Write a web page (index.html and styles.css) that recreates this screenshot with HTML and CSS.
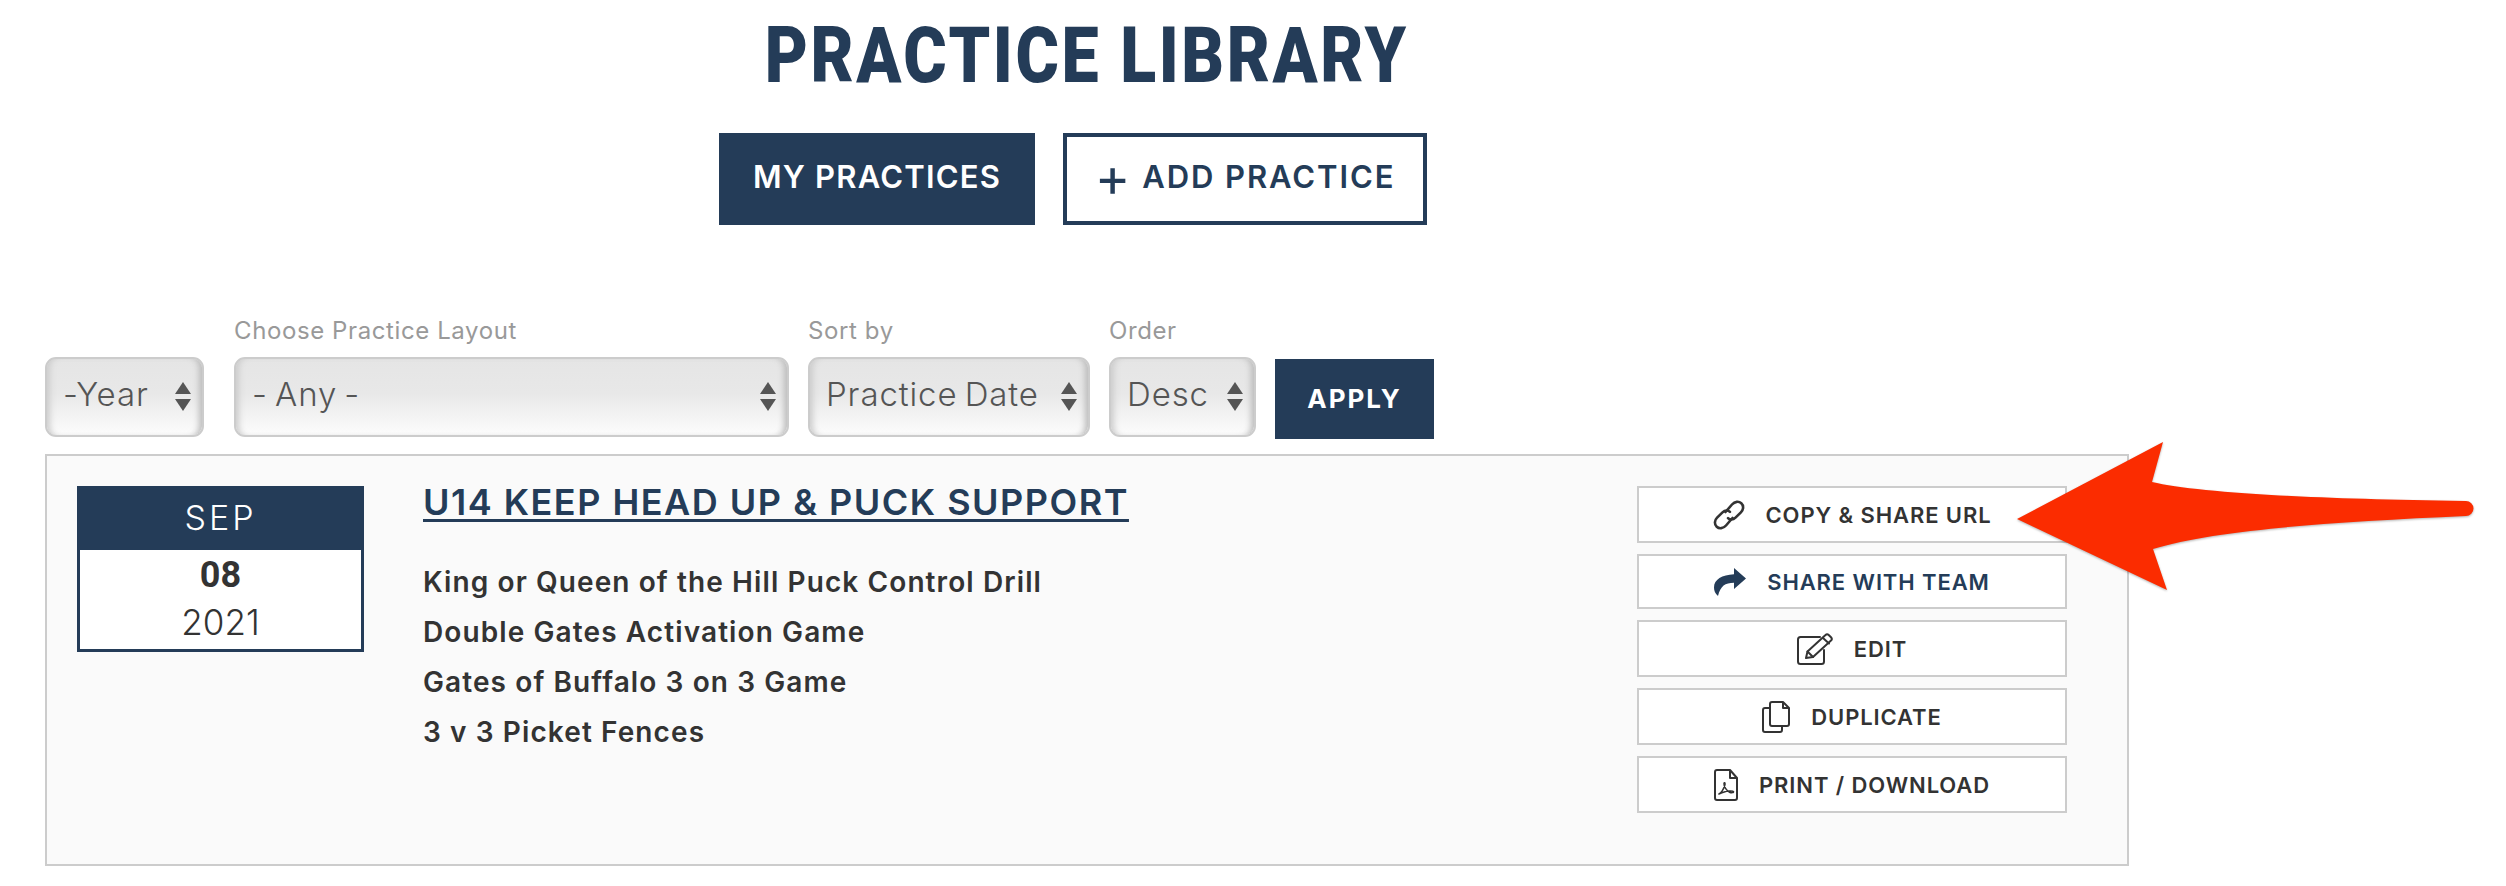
FILE: index.html
```html
<!DOCTYPE html>
<html lang="en">
<head>
<meta charset="utf-8">
<title>Practice Library</title>
<link rel="stylesheet" href="styles.css">
</head>
<body>
<main class="page">
  <h1 class="page-title"><span>PRACTICE LIBRARY</span></h1>
  <nav class="tabs">
    <a class="tab tab-solid">MY PRACTICES</a>
    <a class="tab tab-outline"><span class="plus">+</span>ADD PRACTICE</a>
  </nav>
  <form class="filters">
    <div class="field field-year"><div class="select-wrap"><select><option>-Year</option></select></div></div>
    <div class="field field-layout"><label>Choose Practice Layout</label><div class="select-wrap"><select><option>- Any -</option></select></div></div>
    <div class="field field-sort"><label>Sort by</label><div class="select-wrap"><select><option>Practice Date</option></select></div></div>
    <div class="field field-order"><label>Order</label><div class="select-wrap"><select><option>Desc</option></select></div></div>
    <button class="apply" type="button">APPLY</button>
  </form>
  <section class="card">
    <div class="date">
      <div class="date-month">SEP</div>
      <div class="date-day">08</div>
      <div class="date-year">2021</div>
    </div>
    <div class="info">
      <a class="info-title">U14 KEEP HEAD UP &amp; PUCK SUPPORT</a>
      <ul class="drills">
        <li>King or Queen of the Hill Puck Control Drill</li>
        <li>Double Gates Activation Game</li>
        <li>Gates of Buffalo 3 on 3 Game</li>
        <li>3 v 3 Picket Fences</li>
      </ul>
    </div>
    <div class="actions">
      <a class="action">
        <svg class="icon" width="32" height="32" viewBox="0 0 32 32" fill="none" stroke="#333" stroke-width="2.600" stroke-linecap="round"><path d="M12.500 13l6.500-7.500c2.800-3.200 6.800-3.500 9.300-1.200 2.500 2.300 2.400 6.200-.4 9l-5.400 5.400c-2.600 2.500-5.700 2.300-7.500.4"/><path d="M19.500 19l-6.500 7.500c-2.800 3.200-6.800 3.500-9.300 1.200-2.500-2.300-2.400-6.200.4-9l5.400-5.400c2.600-2.500 5.700-2.300 7.500-.4"/></svg>
        <span>COPY &amp; SHARE URL</span>
      </a>
      <a class="action action-share">
        <svg class="icon" width="32" height="28" viewBox="0 0 32 28" fill="#243c58"><path d="M20 0l12 10.500L20 21v-6.200C11 14.800 6.500 18 4 28 1 25.500 0 22.500 0 19.500 0 11.500 8 6.800 20 6.300z"/></svg>
        <span>SHARE WITH TEAM</span>
      </a>
      <a class="action">
        <svg class="icon" width="36" height="32" viewBox="0 0 36 32" fill="none" stroke="#333" stroke-width="2" stroke-linejoin="round" stroke-linecap="round"><path d="M23 4H3.500C2 4 1 5 1 6.500v22C1 30 2 31 3.500 31h21c1.500 0 2.500-1 2.500-2.500V17"/><path d="M9 25l1.500-6.500L28.500 2c1-1 2.200-1 3.200 0l2.300 2.300c1 1 1 2.200 0 3.200L16 24z"/><path d="M26 5l6 5.500M10.500 18.500l5.500 5.500"/></svg>
        <span>EDIT</span>
      </a>
      <a class="action">
        <svg class="icon" width="28" height="32" viewBox="0 0 28 32" fill="none" stroke="#333" stroke-width="2" stroke-linejoin="round"><path d="M8 8V3c0-1.200.8-2 2-2h11l6 6v16c0 1.200-.8 2-2 2H20"/><path d="M21 1v6h6"/><path d="M8 7H3C1.800 7 1 7.800 1 9v20c0 1.200.8 2 2 2h15c1.200 0 2-.8 2-2v-4H10c-1.200 0-2-.8-2-2z"/></svg>
        <span>DUPLICATE</span>
      </a>
      <a class="action">
        <svg class="icon" width="24" height="32" viewBox="0 0 24 32" fill="none" stroke="#333" stroke-width="2" stroke-linejoin="round"><path d="M1 3c0-1.200.8-2 2-2h13l7 8v20c0 1.200-.8 2-2 2H3c-1.200 0-2-.8-2-2z"/><path d="M16 1v8h7"/><path d="M5 25c2-1 5-5 6-9.500.3-2-.8-2.500-1-.8-.2 3 3 7.500 5.500 8.500 2 .8 4.500.5 4-.5-.5-1-6-.8-10 .5-2.500.8-5 2-4.500 1.800z" stroke-width="1.500"/></svg>
        <span>PRINT / DOWNLOAD</span>
      </a>
    </div>
  </section>
</main>
<svg class="arrow" width="2506" height="886" viewBox="0 0 2506 886"><path d="M2017 519L2163 442 2152 482C2195 492 2300 499 2466 501A7.500 7.500 0 0 1 2466 516C2330 522 2215 530 2153 549L2167 590Z"/></svg>
</body>
</html>
```
FILE: styles.css
```css
* { box-sizing: border-box; }
html, body { margin: 0; padding: 0; background: #fff; }
body { width: 2506px; height: 886px; overflow: hidden; position: relative; font-family: "Inter", "Liberation Sans", sans-serif; color: #333; }
.page { width: 2129px; padding-left: 45px; }
.page-title { margin: 0; height: 133px; padding-top: 16px; text-align: center; font-family: "Roboto", sans-serif; font-weight: 900; font-size: 78px; line-height: 80px; letter-spacing: 3px; color: #243c58; }
.page-title span { display: inline-block; transform: scaleX(.85); }
.tabs { display: flex; gap: 28px; padding-right: 28px; justify-content: center; height: 92px; }
.tab { display: flex; align-items: center; justify-content: center; height: 92px; padding-bottom: 5px; font-size: 31px; font-weight: 600; letter-spacing: 1.200px; }
.tab-solid { width: 316px; background: #243c58; color: #fff; }
.tab-outline { width: 364px; border: 4px solid #243c58; color: #243c58; letter-spacing: 1.900px; }
.plus { font-size: 54px; font-weight: 400; margin-right: 10px; line-height: 1; }
.filters { display: flex; align-items: flex-end; margin-top: 98px; height: 114px; }
.field { display: flex; flex-direction: column; margin-right: 19px; }
.field label { font-size: 24px; font-weight: 400; color: #999; height: 41px; line-height: 30px; letter-spacing: .6px; }
.field-year { width: 159px; margin-right: 30px; }
.field-layout { width: 555px; }
.field-sort { width: 282px; }
.field-order { width: 147px; }
.select-wrap { position: relative; height: 80px; }
.select-wrap select { appearance: none; -webkit-appearance: none; width: 100%; height: 100%; padding: 0 0 6px 16px; border: 2px solid #ccc; border-radius: 11px; font-family: inherit; font-size: 33px; font-weight: 300; letter-spacing: .9px; word-spacing: -3px; color: #555; background: linear-gradient(#e5e5e5 0%, #e8e8e8 45%, #fcfcfc 100%); box-shadow: inset 7px 0 6px -4px #ccc, inset -7px 0 6px -4px #bbb; }
.select-wrap::before, .select-wrap::after { content: ""; position: absolute; right: 13px; border-left: 8px solid transparent; border-right: 8px solid transparent; pointer-events: none; }
.select-wrap::before { top: 25px; border-bottom: 12px solid #555; }
.select-wrap::after { top: 42px; border-top: 12px solid #555; }
.apply { width: 159px; height: 80px; margin-bottom: -2px; padding-bottom: 2px; border: 0; background: #243c58; color: #fff; font-family: inherit; font-size: 26px; font-weight: 700; letter-spacing: 2px; }
.card { display: flex; align-items: flex-start; width: 2084px; height: 412px; margin-top: 17px; padding: 30px 60px 0 30px; border: 2px solid #ccc; background: #fafafa; }
.date { width: 287px; height: 166px; border: 3px solid #243c58; background: #fff; text-align: center; flex: none; }
.date-month { height: 64px; margin: -3px -3px 0; background: #243c58; color: #fff; font-size: 34px; font-weight: 300; letter-spacing: 3px; line-height: 64px; }
.date-day { font-family: "Roboto", sans-serif; font-size: 36px; font-weight: 700; line-height: 50px; }
.date-year { font-size: 35px; font-weight: 300; line-height: 44px; }
.info { margin-left: 59px; margin-top: -4px; flex: none; }
.info-title { display: block; color: #243c58; font-size: 36px; font-weight: 600; letter-spacing: 1.500px; line-height: 40px; text-decoration: underline; text-underline-offset: 4px; text-decoration-thickness: 3px; }
.drills { list-style: none; margin: 35px 0 0; padding: 0; font-size: 28px; font-weight: 600; letter-spacing: 1.100px; line-height: 50px; }
.actions { margin-left: auto; width: 430px; display: flex; flex-direction: column; gap: 11px; flex: none; }
.action { display: flex; align-items: center; justify-content: center; gap: 21px; height: 57px; padding-top: 1px; border: 2px solid #ccc; background: #fff; font-size: 22px; font-weight: 600; letter-spacing: .9px; }
.action-share { height: 55px; color: #243c58; }
.icon { flex: none; }
.arrow { position: absolute; left: 0; top: 0; pointer-events: none; }
.arrow path { fill: #fb2c00; filter: drop-shadow(0 1px 1px rgba(0,0,0,.3)); }
```
